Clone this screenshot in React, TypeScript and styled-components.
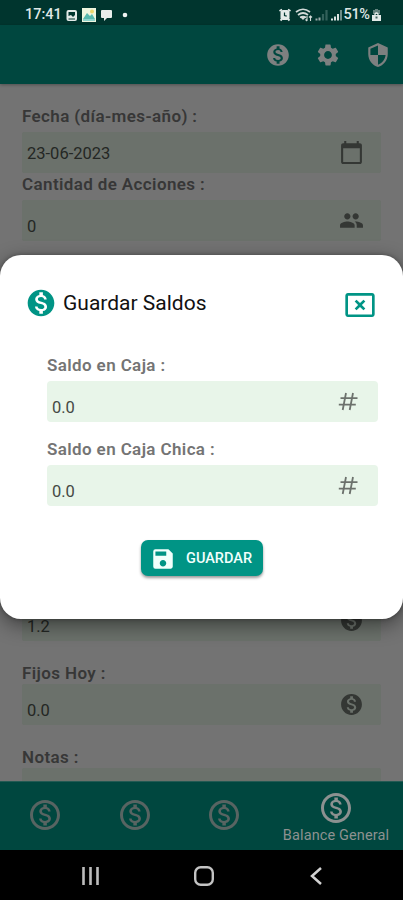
import React from 'react';
import styled, { createGlobalStyle } from 'styled-components';
import {
  MdMonetizationOn,
  MdOutlineMonetizationOn,
  MdSettings,
  MdSecurity,
  MdCalendarToday,
  MdPeople,
  MdSave,
  MdCancelPresentation,
} from 'react-icons/md';

const GlobalStyle = createGlobalStyle`
  * { box-sizing: border-box; }
  body { margin: 0; background: #000; font-family: Roboto, "Liberation Sans", sans-serif; }
  svg { display: block; flex: none; }
`;

const Phone = styled.div`
  position: relative;
  width: 403px;
  height: 900px;
  display: flex;
  flex-direction: column;
  overflow: hidden;
  background: #737373;
`;

const StatusBar = styled.div`
  flex: none;
  height: 25px;
  padding: 5px 22px 0 25px;
  display: flex;
  justify-content: space-between;
  background: #00352e;
  color: #dfe7e5;
  font-size: 14.5px;
  line-height: 20px;
  font-weight: 500;
`;

const StatusGroup = styled.div<{ $gap: number }>`
  display: flex;
  align-items: center;
  height: 20px;
  gap: ${(p) => p.$gap}px;
`;

const StatusText = styled.span<{ $width: number; $spacing?: number }>`
  width: ${(p) => p.$width}px;
  white-space: nowrap;
  letter-spacing: ${(p) => p.$spacing ?? 0}px;
`;

const Toolbar = styled.div`
  flex: none;
  height: 59px;
  padding: 1px 12.5px 0 0;
  display: flex;
  align-items: center;
  justify-content: flex-end;
  gap: 24px;
  background: #00473f;
  color: #7d8080;
  box-shadow: 0 1px 3px rgba(0, 0, 0, 0.3);
`;

const Form = styled.div`
  flex: 1;
  min-height: 0;
  overflow: hidden;
  padding: 19px 22px 0;
`;

const Field = styled.div<{ $gap: number }>`
  height: 68px;
  margin-bottom: ${(p) => p.$gap}px;
`;

const Label = styled.div<{ $muted?: boolean; $tight?: boolean }>`
  height: ${(p) => (p.$tight ? 24 : 29)}px;
  line-height: 26px;
  font-size: 17px;
  font-weight: 600;
  letter-spacing: 0.38px;
  white-space: nowrap;
  color: ${(p) => (p.$muted ? '#747474' : '#373737')};
`;

const Input = styled.div<{ $light?: boolean; $drop?: number }>`
  height: 41px;
  border-radius: ${(p) => (p.$light ? 4 : 2)}px;
  padding: 0 ${(p) => (p.$light ? 20 : 17)}px 0 5px;
  display: flex;
  align-items: center;
  justify-content: space-between;
  background: ${(p) => (p.$light ? '#e8f5e9' : '#6b716b')};
  color: ${(p) => (p.$light ? '#454945' : '#242724')};
  font-size: 16.5px;

  span {
    padding-top: ${(p) => p.$drop ?? 0}px;
  }
  svg {
    color: ${(p) => (p.$light ? '#6c716c' : '#343734')};
  }
`;

const BottomNav = styled.div`
  flex: none;
  height: 69px;
  display: grid;
  grid-template-columns: 90px 89px 90px 134px;
  background: #00473f;
  border-top: 1px solid #235a53;
`;

const Tab = styled.div<{ $active?: boolean }>`
  display: flex;
  flex-direction: column;
  align-items: center;
  padding-top: ${(p) => (p.$active ? 7.5 : 14.5)}px;
  color: ${(p) => (p.$active ? '#8c9190' : '#586462')};
  font-size: 14.5px;
  letter-spacing: 0.12px;
  line-height: 19px;
  white-space: nowrap;
`;

const SystemNav = styled.div`
  flex: none;
  height: 50px;
  display: grid;
  grid-template-columns: 113px 113px 113px;
  padding: 2px 0 0 34px;
  justify-items: center;
  align-items: center;
  background: #000;
`;

const Dialog = styled.section`
  position: absolute;
  top: 255px;
  left: 0;
  width: 403px;
  height: 364px;
  border-radius: 21px;
  background: #fff;
  box-shadow: 0 6px 20px rgba(0, 0, 0, 0.45), 0 0 4px rgba(0, 0, 0, 0.3);
`;

const DialogHeader = styled.div`
  height: 97px;
  padding: 0 27px 2px 25px;
  display: flex;
  align-items: center;
  color: #009485;

  svg:last-child {
    margin-top: 4px;
  }
`;

const DialogTitle = styled.h1`
  flex: 1;
  margin: 0 0 0 6px;
  font-size: 21px;
  font-weight: 400;
  color: #111;
`;

const DialogFields = styled.div`
  padding: 0 25px 0 47px;
`;

const DialogField = styled.div`
  height: 84px;
`;

const SaveButton = styled.button`
  width: 122px;
  height: 36px;
  margin: 20px auto 0 141px;
  padding: 1px 10px 0 9px;
  display: flex;
  align-items: center;
  gap: 10px;
  border: 0;
  border-radius: 7px;
  background: #009485;
  color: #f1fffc;
  font: 500 14.5px Roboto, sans-serif;
  box-shadow: 0 2px 3px rgba(0, 0, 0, 0.4);
`;

const HashIcon = () => (
  <svg width="20" height="19" viewBox="0 0 20 19" fill="none" stroke="currentColor" strokeWidth="1.8">
    <path d="M8 1 4.700 18M15 1l-3.300 17M2.500 6.200h17M.8 12.700h17" />
  </svg>
);

const NotificationIcons = () => (
  <svg width="66" height="16" viewBox="0 0 66 16">
    <rect x="1.500" y="3" width="10.500" height="11" rx="2" fill="#e3eae8" />
    <path d="M3.500 5h6.500v3l-2 2-2-2-2.500 1z" fill="#00352e" />
    <path d="M3.500 12h6.500" stroke="#00352e" strokeWidth="1" />
    <rect x="17" y="1" width="14" height="14" fill="#eef5df" />
    <path d="M18 12l4-6 3 3 2-2 3 5z" fill="#57b9ae" />
    <path d="M18 13h12" stroke="#8ed3cb" strokeWidth="2" />
    <circle cx="27" cy="4.500" r="2" fill="#ecd66c" />
    <path d="M37 3h9q1 0 1 1v6q0 1-1 1h-4l-3 3v-3h-2q-1 0-1-1V4q0-1 1-1z" fill="#e9eeec" />
    <circle cx="60" cy="8" r="2.300" fill="#eef3f2" />
  </svg>
);

const SignalIcons = () => (
  <svg width="64" height="16" viewBox="0 0 64 16" fill="none">
    <rect x="2.500" y="3" width="9" height="10" rx="2.500" fill="#e3eae8" />
    <path d="M1.500 4l2.500-1.500M12.500 4L10 2.500M2.500 13.500l1.500-1.500M11.500 13.500L10 12" stroke="#e3eae8" strokeWidth="1.800" />
    <path d="M6.500 5.500v3l2.200.6" stroke="#00352e" strokeWidth="1.200" />
    <path d="M18 5q7-5.500 14 0M20 8q5-4 10 0M22 10.500q3-2 6 0" stroke="#d2dad8" strokeWidth="1.700" />
    <path d="M25 13l-3-3h6z" fill="#d2dad8" />
    <path d="M29 9v5M27.500 12.500L29 14M32.500 14V9M31 10.500L32.500 9l1.500 1.500" stroke="#d2dad8" strokeWidth="1.100" />
    <path d="M38.500 13.500v-2M41.500 13.500v-3" stroke="#9cabaa" strokeWidth="2" />
    <path d="M45 13.500V7M48.500 13.500V3" stroke="#32605a" strokeWidth="2.200" />
    <path d="M54 13.500v-2M57 13.500V9.500M60 13.500V7" stroke="#dae2e0" strokeWidth="2" />
    <path d="M63 13.500V3" stroke="#7a9692" strokeWidth="1.800" />
  </svg>
);

const BatteryIcon = () => (
  <svg width="9" height="14" viewBox="0 0 9 14">
    <path d="M3 1h3v1h2v4H1V2h2z" fill="#63827d" />
    <path d="M0 7h9v6H0z" fill="#e3eae8" />
    <path d="M3 8V6q1.500-2 3 0v2" fill="none" stroke="#e3eae8" strokeWidth="1.300" />
    <path d="M3.500 8.500h2v2h-2z" fill="#40635e" />
  </svg>
);

const fields = [
  { label: 'Fecha (día-mes-año) :', value: '23-06-2023', icon: <MdCalendarToday size={25} />, gap: 0, drop: 1, tight: false },
  { label: 'Cantidad de Acciones :', value: '0', icon: <MdPeople size={25} />, gap: 337, drop: 11, tight: false },
  { label: '', value: '1.2', icon: <MdMonetizationOn size={25} />, gap: 16, drop: 11, tight: true },
  { label: 'Fijos Hoy :', value: '0.0', icon: <MdMonetizationOn size={25} />, gap: 16, drop: 11, tight: true },
  { label: 'Notas :', value: '', icon: null, gap: 0, drop: 0, tight: true },
];

export default function App() {
  return (
    <Phone>
      <GlobalStyle />
      <StatusBar>
        <StatusGroup $gap={5}>
          <StatusText $width={35}>17:41</StatusText>
          <NotificationIcons />
        </StatusGroup>
        <StatusGroup $gap={1.5}>
          <SignalIcons />
          <StatusText $width={27} $spacing={-0.35}>51%</StatusText>
          <BatteryIcon />
        </StatusGroup>
      </StatusBar>
      <Toolbar>
        <MdMonetizationOn size={26} />
        <MdSettings size={26} />
        <MdSecurity size={26} />
      </Toolbar>
      <Form>
        {fields.map((f) => (
          <Field key={f.label} $gap={f.gap}>
            <Label $tight={f.tight}>{f.label}</Label>
            <Input $drop={f.drop}>
              <span>{f.value}</span>
              {f.icon}
            </Input>
          </Field>
        ))}
      </Form>
      <BottomNav>
        <Tab><MdOutlineMonetizationOn size={36} /></Tab>
        <Tab><MdOutlineMonetizationOn size={36} /></Tab>
        <Tab><MdOutlineMonetizationOn size={36} /></Tab>
        <Tab $active>
          <MdOutlineMonetizationOn size={36} />
          Balance General
        </Tab>
      </BottomNav>
      <SystemNav>
        <svg width="20" height="20" viewBox="0 0 20 20" stroke="#bcbcbc" strokeWidth="2.600">
          <path d="M2.500 1v18M9.500 1v18M16.500 1v18" />
        </svg>
        <svg width="20" height="20" viewBox="0 0 20 20" fill="none" stroke="#c4c4c4" strokeWidth="2.400">
          <rect x="1.200" y="1.200" width="17.600" height="17.600" rx="5.500" />
        </svg>
        <svg width="20" height="20" viewBox="0 0 20 20" fill="none" stroke="#d2d2d2" strokeWidth="2.500">
          <path d="M14 2L5 10l9 8" />
        </svg>
      </SystemNav>
      <Dialog>
        <DialogHeader>
          <MdMonetizationOn size={32} />
          <DialogTitle>Guardar Saldos</DialogTitle>
          <MdCancelPresentation size={32} />
        </DialogHeader>
        <DialogFields>
          {['Saldo en Caja :', 'Saldo en Caja Chica :'].map((label) => (
            <DialogField key={label}>
              <Label $muted>{label}</Label>
              <Input $light $drop={12}>
                <span>0.0</span>
                <HashIcon />
              </Input>
            </DialogField>
          ))}
        </DialogFields>
        <SaveButton>
          <MdSave size={26} />
          GUARDAR
        </SaveButton>
      </Dialog>
    </Phone>
  );
}
